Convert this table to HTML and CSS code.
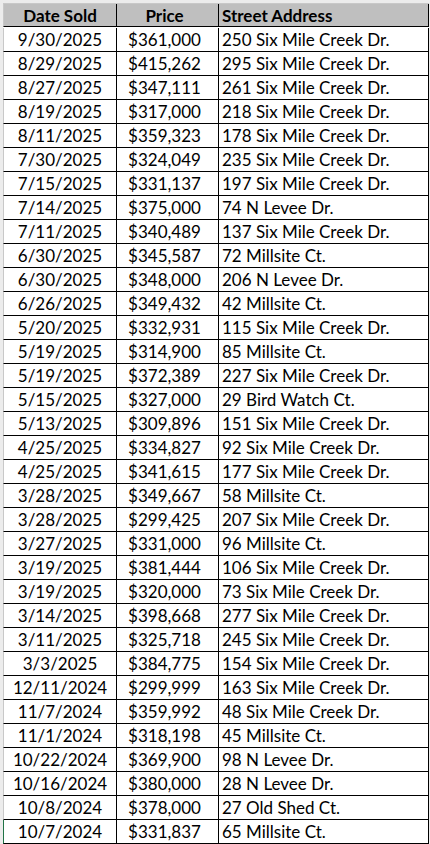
FILE: index.html
```html
<!DOCTYPE html>
<html>
<head>
<meta charset="utf-8">
<link rel="stylesheet" href="styles.css">
</head>
<body>
<div class="sheet">
  <div class="grid">
    <div class="cell hd c1">Date Sold</div><div class="cell hd c2">Price</div><div class="cell hd c3">Street Address</div>
    <div class="cell c1">9/30/2025</div><div class="cell c2">$361,000</div><div class="cell c3">250 Six Mile Creek Dr.</div>
    <div class="cell c1">8/29/2025</div><div class="cell c2">$415,262</div><div class="cell c3">295 Six Mile Creek Dr.</div>
    <div class="cell c1">8/27/2025</div><div class="cell c2">$347,111</div><div class="cell c3">261 Six Mile Creek Dr.</div>
    <div class="cell c1">8/19/2025</div><div class="cell c2">$317,000</div><div class="cell c3">218 Six Mile Creek Dr.</div>
    <div class="cell c1">8/11/2025</div><div class="cell c2">$359,323</div><div class="cell c3">178 Six Mile Creek Dr.</div>
    <div class="cell c1">7/30/2025</div><div class="cell c2">$324,049</div><div class="cell c3">235 Six Mile Creek Dr.</div>
    <div class="cell c1">7/15/2025</div><div class="cell c2">$331,137</div><div class="cell c3">197 Six Mile Creek Dr.</div>
    <div class="cell c1">7/14/2025</div><div class="cell c2">$375,000</div><div class="cell c3">74 N Levee Dr.</div>
    <div class="cell c1">7/11/2025</div><div class="cell c2">$340,489</div><div class="cell c3">137 Six Mile Creek Dr.</div>
    <div class="cell c1">6/30/2025</div><div class="cell c2">$345,587</div><div class="cell c3">72 Millsite Ct.</div>
    <div class="cell c1">6/30/2025</div><div class="cell c2">$348,000</div><div class="cell c3">206 N Levee Dr.</div>
    <div class="cell c1">6/26/2025</div><div class="cell c2">$349,432</div><div class="cell c3">42 Millsite Ct.</div>
    <div class="cell c1">5/20/2025</div><div class="cell c2">$332,931</div><div class="cell c3">115 Six Mile Creek Dr.</div>
    <div class="cell c1">5/19/2025</div><div class="cell c2">$314,900</div><div class="cell c3">85 Millsite Ct.</div>
    <div class="cell c1">5/19/2025</div><div class="cell c2">$372,389</div><div class="cell c3">227 Six Mile Creek Dr.</div>
    <div class="cell c1">5/15/2025</div><div class="cell c2">$327,000</div><div class="cell c3">29 Bird Watch Ct.</div>
    <div class="cell c1">5/13/2025</div><div class="cell c2">$309,896</div><div class="cell c3">151 Six Mile Creek Dr.</div>
    <div class="cell c1">4/25/2025</div><div class="cell c2">$334,827</div><div class="cell c3">92 Six Mile Creek Dr.</div>
    <div class="cell c1">4/25/2025</div><div class="cell c2">$341,615</div><div class="cell c3">177 Six Mile Creek Dr.</div>
    <div class="cell c1">3/28/2025</div><div class="cell c2">$349,667</div><div class="cell c3">58 Millsite Ct.</div>
    <div class="cell c1">3/28/2025</div><div class="cell c2">$299,425</div><div class="cell c3">207 Six Mile Creek Dr.</div>
    <div class="cell c1">3/27/2025</div><div class="cell c2">$331,000</div><div class="cell c3">96 Millsite Ct.</div>
    <div class="cell c1">3/19/2025</div><div class="cell c2">$381,444</div><div class="cell c3">106 Six Mile Creek Dr.</div>
    <div class="cell c1">3/19/2025</div><div class="cell c2">$320,000</div><div class="cell c3">73 Six Mile Creek Dr.</div>
    <div class="cell c1">3/14/2025</div><div class="cell c2">$398,668</div><div class="cell c3">277 Six Mile Creek Dr.</div>
    <div class="cell c1">3/11/2025</div><div class="cell c2">$325,718</div><div class="cell c3">245 Six Mile Creek Dr.</div>
    <div class="cell c1">3/3/2025</div><div class="cell c2">$384,775</div><div class="cell c3">154 Six Mile Creek Dr.</div>
    <div class="cell c1">12/11/2024</div><div class="cell c2">$299,999</div><div class="cell c3">163 Six Mile Creek Dr.</div>
    <div class="cell c1">11/7/2024</div><div class="cell c2">$359,992</div><div class="cell c3">48 Six Mile Creek Dr.</div>
    <div class="cell c1">11/1/2024</div><div class="cell c2">$318,198</div><div class="cell c3">45 Millsite Ct.</div>
    <div class="cell c1">10/22/2024</div><div class="cell c2">$369,900</div><div class="cell c3">98 N Levee Dr.</div>
    <div class="cell c1">10/16/2024</div><div class="cell c2">$380,000</div><div class="cell c3">28 N Levee Dr.</div>
    <div class="cell c1">10/8/2024</div><div class="cell c2">$378,000</div><div class="cell c3">27 Old Shed Ct.</div>
    <div class="cell c1 sel">10/7/2024</div><div class="cell c2">$331,837</div><div class="cell c3">65 Millsite Ct.</div>
  </div>
</div>
</body>
</html>
```
FILE: styles.css
```css
html, body {
  margin: 0;
  padding: 0;
  background: #f3f3f3;
}
.sheet {
  width: 430px;
  height: 844px;
  padding: 3px 0 0 3px;
  box-sizing: border-box;
  background: #ececec;
  overflow: hidden;
}
.grid {
  display: grid;
  grid-template-columns: 114px 102px 210px;
  grid-auto-rows: 24px;
  border-top: 1px solid #c8c8c8;
  width: 426px;
  background: #fff;
}
.cell {
  box-sizing: border-box;
  border-right: 1px solid #000;
  border-bottom: 1px solid #000;
  display: flex;
  align-items: center;
  font-family: Lato, "Open Sans", sans-serif;
  font-size: 17px;
  color: #000;
  white-space: nowrap;
  overflow: hidden;
}
.c1 {
  justify-content: center;
  border-left: 1px solid #c8c8c8;
}
.c2 {
  justify-content: center;
  padding-right: 6px;
}
.c3 {
  padding-left: 3px;
}
.hd {
  height: 23px;
  background: #bfbfbf;
  font-weight: bold;
}
.sel {
  border-left: 1px solid #217346;
}
```
